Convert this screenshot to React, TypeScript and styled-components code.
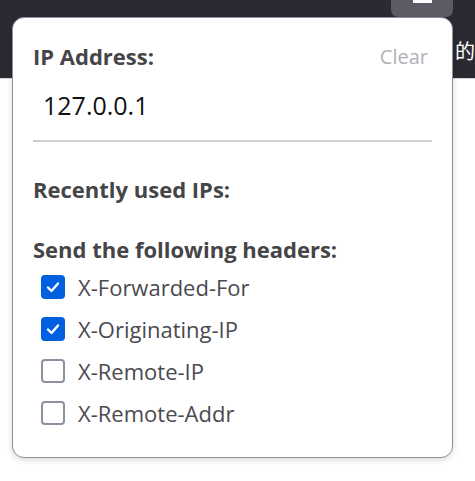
import React from 'react'
import styled, { createGlobalStyle } from 'styled-components'

const Global = createGlobalStyle`
  html, body {
    margin: 0;
    padding: 0;
    background: #ffffff;
    font-family: "Open Sans", "Noto Sans", sans-serif;
  }
`

const Page = styled.div`
  position: relative;
  width: 475px;
  height: 481px;
  overflow: hidden;
  background: #ffffff;
`

const Toolbar = styled.div`
  height: 78px;
  background: #2b2a33;
  border-bottom: 1px solid #d4d4d8;
  display: flex;
  justify-content: flex-end;
  align-items: flex-start;
  padding-right: 22px;
`

const ToolbarButton = styled.div`
  width: 62px;
  height: 17px;
  background: #5b5b66;
  border-radius: 0 0 7px 7px;
  display: flex;
  justify-content: center;
`

const ButtonGlyph = styled.div`
  width: 19px;
  height: 3px;
  background: #fbfbfe;
`

const BehindText = styled.span`
  position: absolute;
  left: 455px;
  top: 36px;
  color: #ffffff;
  white-space: nowrap;
  font-family: "Noto Sans CJK SC", sans-serif;
  font-size: 20px;
`

const Popup = styled.div`
  position: absolute;
  left: 12px;
  top: 17px;
  width: 441px;
  height: 441px;
  box-sizing: border-box;
  background: #ffffff;
  border: 1px solid #8f8f9d;
  border-radius: 12px;
  box-shadow: 0 2px 6px rgba(0, 0, 0, 0.15);
  padding: 20px 20px 0 20px;
  display: flex;
  flex-direction: column;
`

const HeaderRow = styled.div`
  display: flex;
  justify-content: space-between;
  align-items: center;
  height: 36px;
`

const Heading = styled.div<{ $top?: number }>`
  font-weight: 700;
  font-size: 22px;
  line-height: 30px;
  color: #454548;
  margin-top: ${p => p.$top ?? 0}px;
`

const ClearLink = styled.span`
  font-size: 20px;
  color: #b1b1b9;
  padding-right: 4px;
`

const AddressInput = styled.input`
  border: none;
  border-bottom: 2px solid #cfcfd3;
  outline: none;
  font-family: "Open Sans", sans-serif;
  font-size: 25px;
  line-height: 34px;
  height: 34px;
  color: #111111;
  padding: 14px 10px 18px;
  margin: 0;
  background: transparent;
`

const List = styled.div`
  display: flex;
  flex-direction: column;
  margin-top: 2px;
`

const Row = styled.label`
  display: flex;
  align-items: center;
  height: 42px;
  gap: 13px;
  padding-left: 8px;
`

const Box = styled.span<{ $on: boolean }>`
  width: 24px;
  height: 24px;
  box-sizing: border-box;
  border-radius: 4px;
  border: 2px solid ${p => (p.$on ? '#0060df' : '#8f8f9d')};
  background: ${p => (p.$on ? '#0060df' : '#ffffff')};
  display: flex;
  align-items: center;
  justify-content: center;
`

const Label = styled.span`
  font-size: 22px;
  color: #4a4a4f;
`

const headers = [
  { name: 'X-Forwarded-For', on: true },
  { name: 'X-Originating-IP', on: true },
  { name: 'X-Remote-IP', on: false },
  { name: 'X-Remote-Addr', on: false },
]

const Check = () => (
  <svg width="16" height="16" viewBox="0 0 16 16">
    <path d="M3 8.5 L6.5 12 L13 4.5" fill="none" stroke="#fff" strokeWidth="2.4" strokeLinecap="round" strokeLinejoin="round" />
  </svg>
)

export default function App() {
  return (
    <Page>
      <Global />
      <Toolbar>
        <ToolbarButton>
          <ButtonGlyph />
        </ToolbarButton>
      </Toolbar>
      <BehindText>的=</BehindText>
      <Popup>
        <HeaderRow>
          <Heading>IP Address:</Heading>
          <ClearLink>Clear</ClearLink>
        </HeaderRow>
        <AddressInput defaultValue="127.0.0.1" />
        <Heading $top={32}>Recently used IPs:</Heading>
        <Heading $top={30}>Send the following headers:</Heading>
        <List>
          {headers.map(h => (
            <Row key={h.name}>
              <Box $on={h.on}>{h.on && <Check />}</Box>
              <Label>{h.name}</Label>
            </Row>
          ))}
        </List>
      </Popup>
    </Page>
  )
}
